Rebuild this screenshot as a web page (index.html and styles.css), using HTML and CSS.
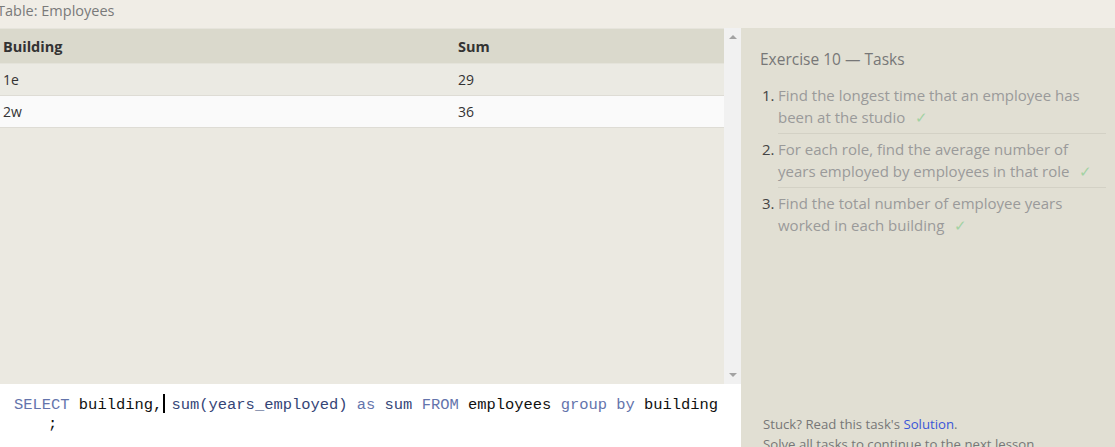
FILE: index.html
```html
<!DOCTYPE html>
<html>
<head>
<meta charset="utf-8">
<link rel="stylesheet" href="styles.css">
</head>
<body>
<div class="top"><span class="top-title">Table: Employees</span></div>
<div class="main">
  <div class="left">
    <div class="results">
      <div class="table-area">
        <table class="tbl">
          <thead>
            <tr><th class="c1">Building</th><th>Sum</th></tr>
          </thead>
          <tbody>
            <tr class="odd"><td class="c1">1e</td><td>29</td></tr>
            <tr class="even"><td class="c1">2w</td><td>36</td></tr>
          </tbody>
        </table>
      </div>
      <div class="scrollbar">
        <span class="arrow up"></span>
        <span class="arrow down"></span>
      </div>
    </div>
    <div class="editor">
      <div class="code-line"><span class="kw">SELECT</span> building,<span class="caret"></span> <span class="fn">sum(years_employed)</span> <span class="kw">as</span> <span class="fn">sum</span> <span class="kw">FROM</span> employees <span class="kw">group</span> <span class="kw">by</span> building</div>
      <div class="code-line indent">;</div>
    </div>
  </div>
  <div class="right">
    <div class="tasks">
      <div class="tasks-title">Exercise 10 — Tasks</div>
      <ol class="task-list">
        <li class="task"><span class="num">1.</span><span class="task-text">Find the longest time that an employee has been at the studio <span class="check">✓</span></span></li>
        <li class="task"><span class="num">2.</span><span class="task-text">For each role, find the average number of years employed by employees in that role <span class="check">✓</span></span></li>
        <li class="task last"><span class="num">3.</span><span class="task-text">Find the total number of employee years worked in each building <span class="check">✓</span></span></li>
      </ol>
    </div>
    <div class="footer">
      <div class="foot-line">Stuck? Read this task's <a class="link">Solution</a>.</div>
      <div class="foot-line">Solve all tasks to continue to the next lesson.</div>
    </div>
  </div>
</div>
</body>
</html>
```
FILE: styles.css
```css
html, body {
  margin: 0;
  padding: 0;
}
body {
  width: 1115px;
  height: 447px;
  overflow: hidden;
  font-family: "Open Sans", "Noto Sans", sans-serif;
  background: #f0ede5;
}
.top {
  height: 28px;
  background: #f0ede6;
  display: flex;
  align-items: center;
  overflow: hidden;
}
.top-title {
  margin-left: -3px;
  font-size: 14.5px;
  color: #7a7a7a;
  margin-top: -8px;
}
.main {
  display: flex;
  height: 419px;
}
.left {
  width: 741px;
  display: flex;
  flex-direction: column;
}
.results {
  height: 356px;
  display: flex;
  background: #ebe9e1;
}
.table-area {
  flex: 1;
  border-top: 1px solid #e6e4dc;
}
.tbl {
  width: 100%;
  border-collapse: collapse;
  font-size: 14px;
  color: #333;
}
.tbl th {
  text-align: left;
  background: #dad9cc;
  height: 34px;
  padding: 0 3px;
  font-weight: 700;
  color: #333;
  font-size: 14.5px;
  border-bottom: 1px solid #e4e3da;
}
.tbl td {
  height: 31px;
  padding: 0 3px;
  border-bottom: 1px solid #dedcd5;
}
.tbl .c1 {
  width: 449px;
}
.odd td { background: #ebeae3; }
.even td { background: #fafafa; }
.scrollbar {
  width: 17px;
  background: #f1f1f1;
  display: flex;
  flex-direction: column;
  justify-content: space-between;
  align-items: center;
  padding: 7px 0 7px;
  box-sizing: border-box;
}
.arrow {
  width: 0;
  height: 0;
  border-left: 4px solid transparent;
  border-right: 4px solid transparent;
}
.arrow.up { border-bottom: 4px solid #a3a3a3; }
.arrow.down { border-top: 4px solid #a3a3a3; }
.editor {
  flex: 1;
  background: #fff;
  padding: 10px 0 0 14px;
  font-family: "Liberation Mono", "DejaVu Sans Mono", monospace;
  font-size: 15.45px;
  color: #111;
}
.code-line {
  height: 20px;
  line-height: 20px;
  white-space: pre;
}
.code-line.indent {
  padding-left: 34px;
}
.kw { color: #6474ac; }
.fn { color: #354577; }
.caret {
  display: inline-block;
  width: 2px;
  height: 19px;
  background: #000;
  vertical-align: -4px;
  margin-left: 1px;
  margin-right: -3px;
}
.right {
  flex: 1;
  background: #e1dfd3;
  display: flex;
  flex-direction: column;
  justify-content: space-between;
  padding: 0 9px 0 19px;
  overflow: hidden;
}
.tasks-title {
  margin-top: 20px;
  font-size: 15.5px;
  color: #777;
  line-height: 22px;
}
.task-list {
  list-style: none;
  margin: 14px 0 0 0;
  padding: 0;
}
.task {
  display: flex;
  font-size: 15px;
  line-height: 22px;
  color: #9a9a9a;
  padding: 0 0 5px 0;
  margin-bottom: 4px;
}
.task .task-text {
  flex: 1;
  border-bottom: 1px solid #d3d1c5;
  padding-bottom: 5px;
  margin-bottom: -5px;
}
.task.last .task-text { border-bottom: none; }
.num {
  width: 16px;
  margin-left: 2px;
  color: #444;
}
.check {
  color: #a3d2a3;
  margin-left: 6px;
}
.footer {
  padding: 0 0 0 3px;
  font-size: 13.2px;
  color: #777;
  line-height: 20px;
  margin-bottom: -7px;
}
.link { color: #3a56d8; }
```
